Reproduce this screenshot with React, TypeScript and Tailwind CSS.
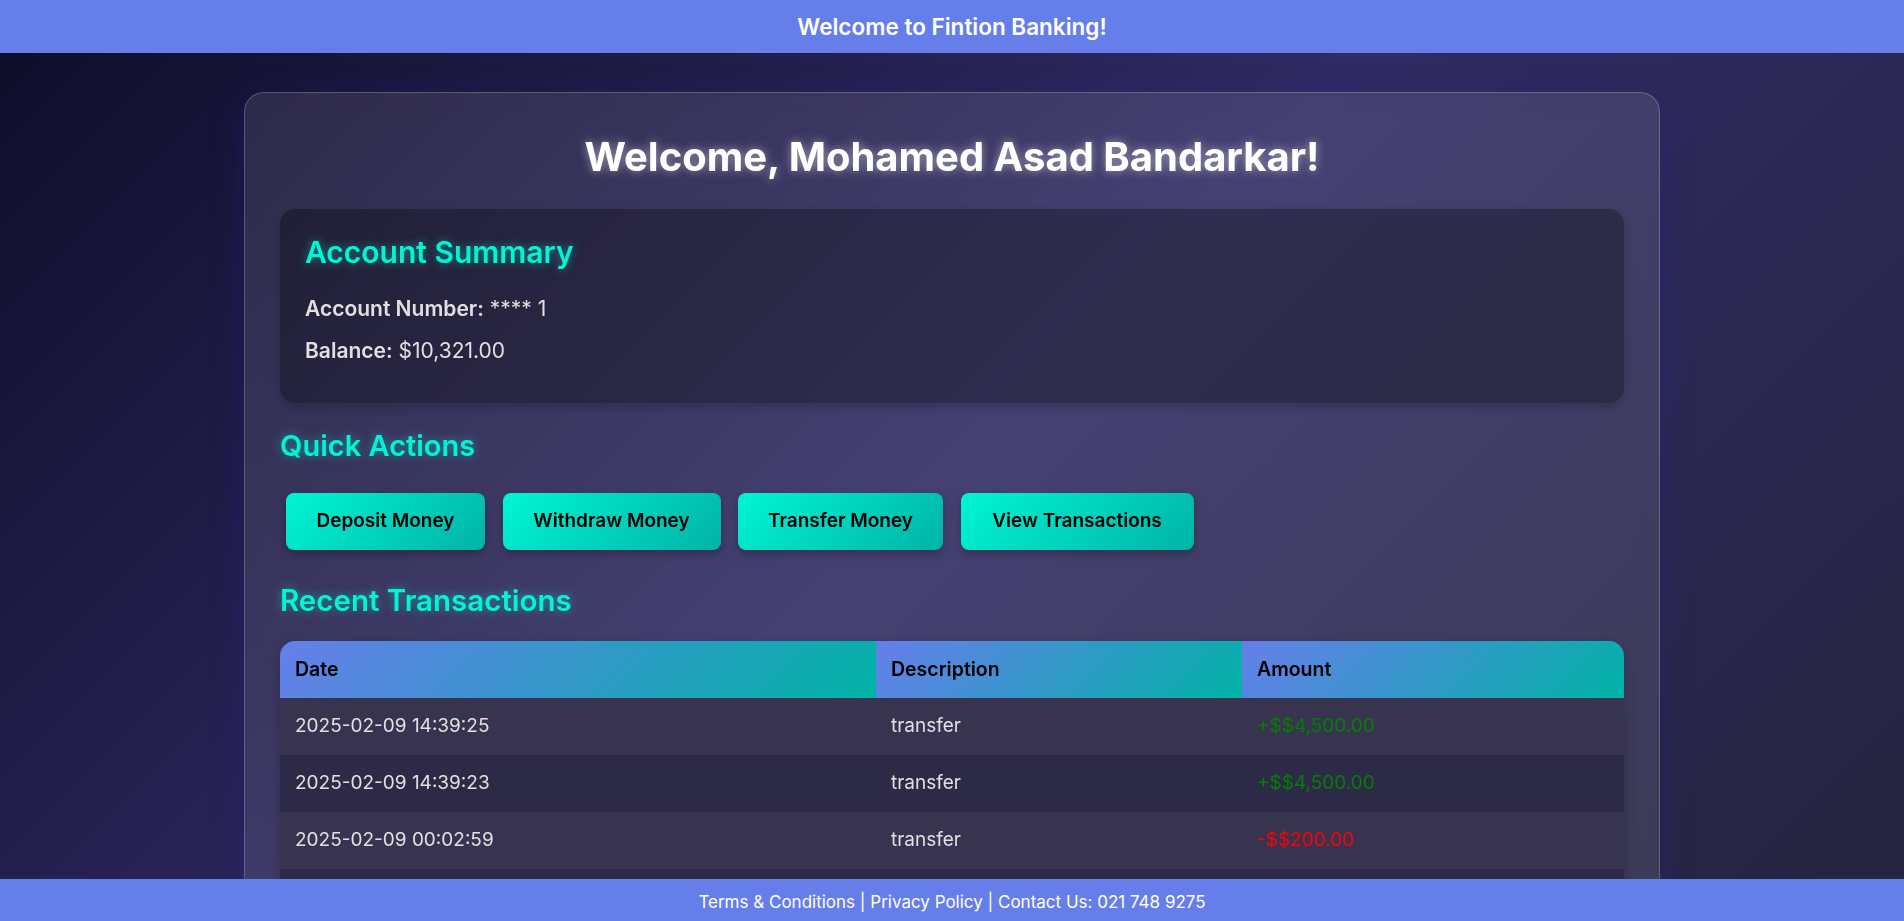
import React from "react";

const buttons = [
  { label: "Deposit Money", cls: "w-[199px]" },
  { label: "Withdraw Money", cls: "w-[218px]" },
  { label: "Transfer Money", cls: "w-[205px]" },
  { label: "View Transactions", cls: "w-[233px]" },
];

const rows = [
  { date: "2025-02-09 14:39:25", desc: "transfer", amount: "+$$4,500.00", positive: true },
  { date: "2025-02-09 14:39:23", desc: "transfer", amount: "+$$4,500.00", positive: true },
  { date: "2025-02-09 00:02:59", desc: "transfer", amount: "-$$200.00", positive: false },
  { date: "2025-02-08 23:58:12", desc: "deposit", amount: "+$$1,000.00", positive: true },
];

export default function App() {
  return (
    <div className="min-h-screen bg-[linear-gradient(135deg,#0f0c29,#302b63,#24243e)] bg-fixed font-['Inter',sans-serif] text-[#e0e0e0] pb-[80px]">
      <header className="h-[53px] bg-[#667eea] flex items-center justify-center">
        <h1 className="text-[22.5px] font-semibold text-white">Welcome to Fintion Banking!</h1>
      </header>

      <main className="mx-auto mt-[39px] w-[1416px] rounded-[20px] border border-white/20 bg-white/10 px-[35px] pt-[40px] pb-[40px] shadow-[0_8px_32px_0_rgba(31,38,135,0.37)] backdrop-blur-[10px]">
        <h2 className="text-center text-[40px] leading-[48px] font-bold text-white [text-shadow:0_0_10px_rgba(255,255,255,0.5)]">
          Welcome, Mohamed Asad Bandarkar!
        </h2>

        <section className="mt-[28px] rounded-[15px] bg-black/30 px-[25px] pt-[25px] pb-[38px] shadow-[0_4px_10px_rgba(0,0,0,0.2)]">
          <h3 className="text-[30px] leading-[36px] font-semibold text-[#00f5d4] [text-shadow:0_0_10px_rgba(0,245,212,0.5)]">
            Account Summary
          </h3>
          <div className="mt-[25px] flex flex-col gap-[14px] text-[21px] leading-[28px]">
            <p>
              <span className="font-semibold">Account Number:</span> **** 1
            </p>
            <p>
              <span className="font-semibold">Balance:</span> $10,321.00
            </p>
          </div>
        </section>

        <h3 className="mt-[25px] text-[29px] leading-[36px] font-semibold text-[#00f5d4] [text-shadow:0_0_10px_rgba(0,245,212,0.5)]">
          Quick Actions
        </h3>
        <div className="mt-[29px] ml-[6px] flex gap-[17.5px]">
          {buttons.map((b) => (
            <button
              key={b.label}
              className={`${b.cls} h-[57px] flex items-center justify-center rounded-[8px] bg-[linear-gradient(135deg,#00f5d4,#00b3a6)] text-[19px] font-semibold text-black shadow-[0_4px_8px_rgba(0,0,0,0.25)]`}
            >
              {b.label}
            </button>
          ))}
        </div>

        <h3 className="mt-[32px] text-[29.5px] leading-[36px] font-semibold text-[#00f5d4] [text-shadow:0_0_10px_rgba(0,245,212,0.5)]">
          Recent Transactions
        </h3>

        <div className="mt-[23px] overflow-hidden rounded-[15px] shadow-[0_4px_12px_rgba(0,0,0,0.25)]">
          <table className="w-full table-fixed border-collapse text-left">
            <thead>
              <tr className="h-[57px]">
                <th className="w-[596px] bg-[linear-gradient(135deg,#667eea,#00b3a6)] px-[15px] align-middle text-[19.5px] font-semibold text-black">
                  Date
                </th>
                <th className="w-[366px] bg-[linear-gradient(135deg,#667eea,#00b3a6)] px-[15px] align-middle text-[19.5px] font-semibold text-black">
                  Description
                </th>
                <th className="bg-[linear-gradient(135deg,#667eea,#00b3a6)] px-[15px] align-middle text-[19.5px] font-semibold text-black">
                  Amount
                </th>
              </tr>
            </thead>
            <tbody>
              {rows.map((r, i) => (
                <tr key={i} className={`h-[57px] ${i % 2 === 0 ? "bg-[#38344f]" : "bg-[#2d2a48]"}`}>
                  <td className="px-[15px] align-middle text-[19px] text-[#e0e0e0]">{r.date}</td>
                  <td className="px-[15px] align-middle text-[19px] text-[#e0e0e0]">{r.desc}</td>
                  <td className={`px-[15px] align-middle text-[19px] ${r.positive ? "text-[#008000]" : "text-[#ff0000]"}`}>
                    {r.amount}
                  </td>
                </tr>
              ))}
            </tbody>
          </table>
        </div>
      </main>

      <footer className="fixed bottom-0 left-0 right-0 z-10 h-[42px] bg-[#667eea] flex items-center justify-center pt-[6px] text-[17px] text-white">
        Terms &amp; Conditions | Privacy Policy | Contact Us: 021 748 9275
      </footer>
    </div>
  );
}
